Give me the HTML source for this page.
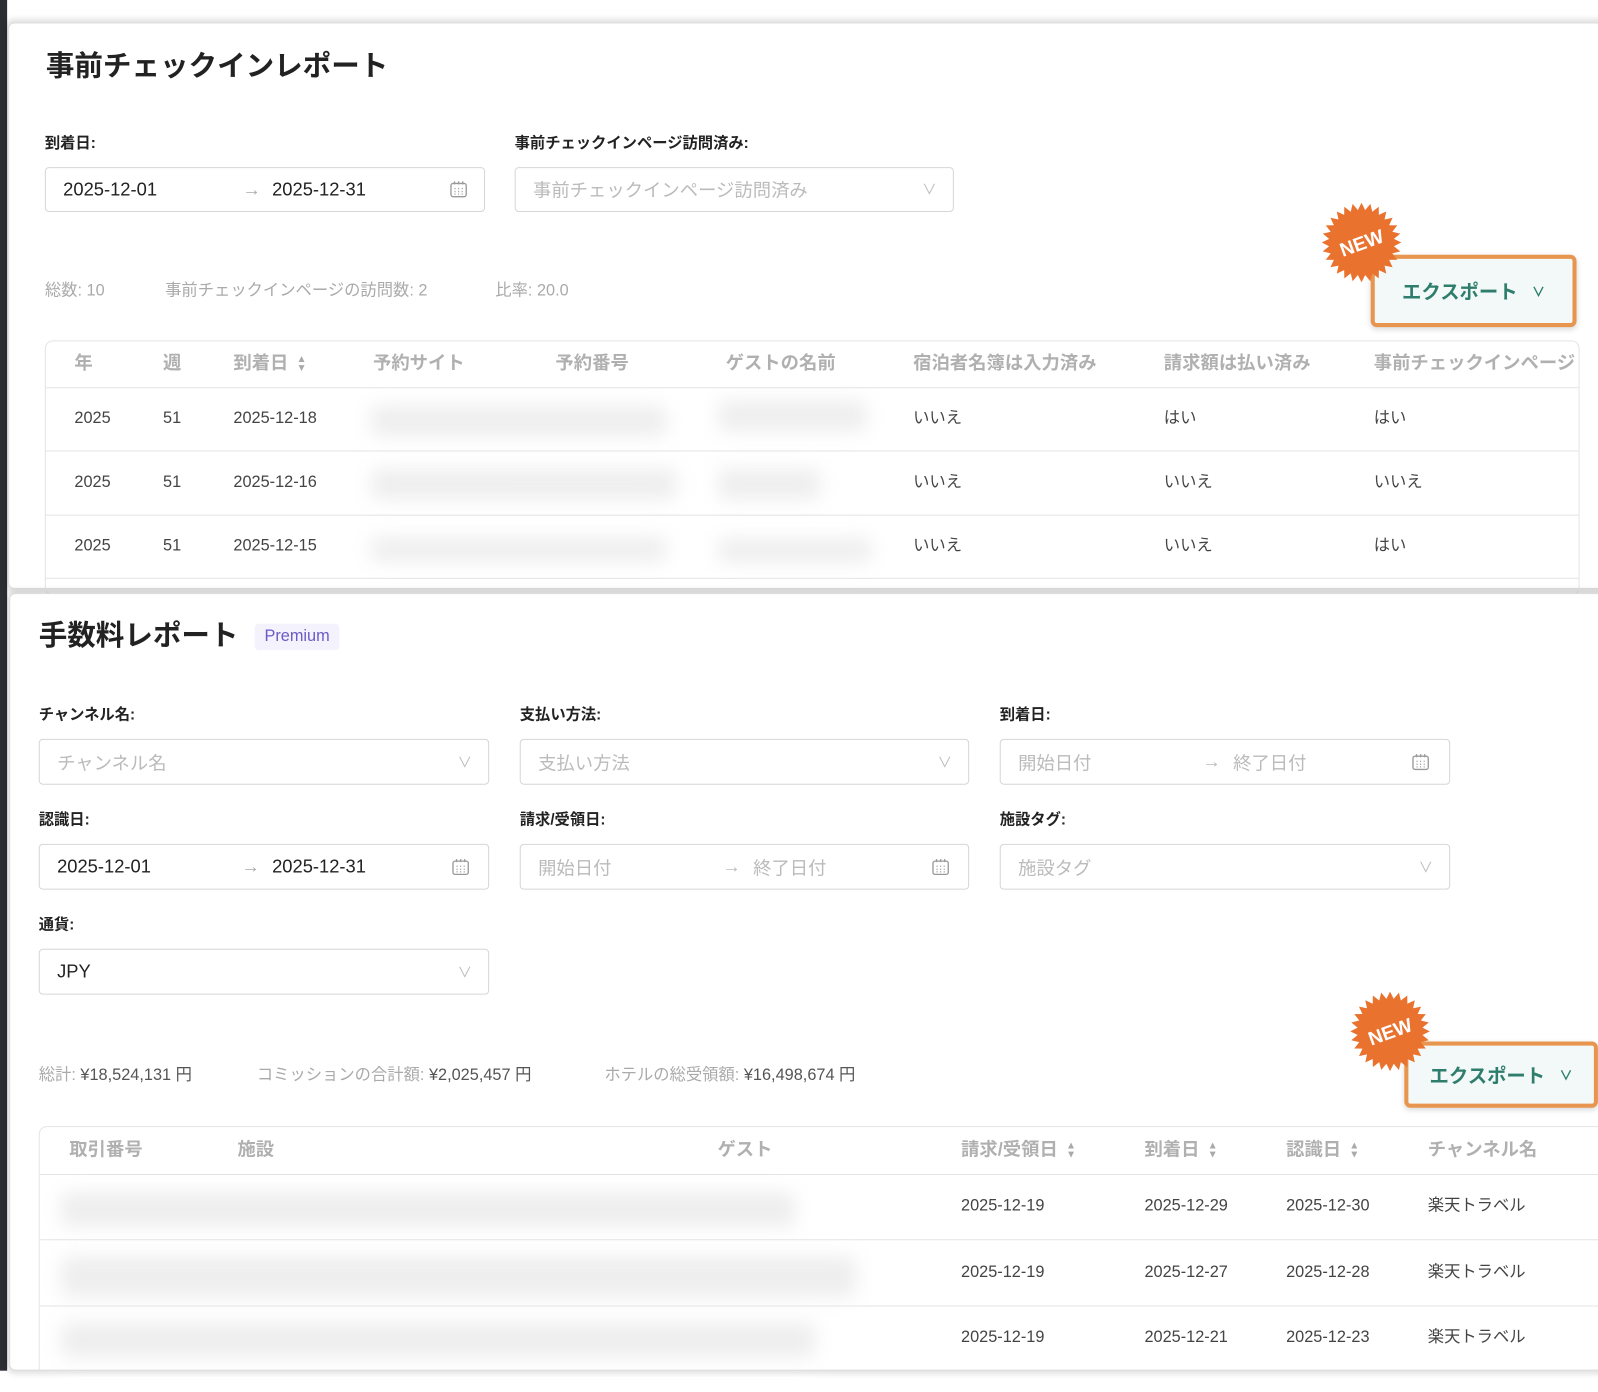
<!DOCTYPE html>
<html><head><meta charset="utf-8"><style>
*{box-sizing:border-box;margin:0;padding:0}
body{width:1598px;height:1392px;background:#fff;position:relative;overflow:hidden;font-family:"Liberation Sans","Noto Sans CJK JP",sans-serif;color:#333}
#w{position:absolute;left:0;top:0;width:1568px;height:1366px;transform:scale(1.0191);transform-origin:0 0}
.a{position:absolute}
.strip{left:0;top:0;width:7px;height:1345px;background:#2b2e33}
.card{background:#fff;border:1px solid #ddd;box-shadow:0 0 6px 3px rgba(0,0,0,.12);border-radius:6px}
.title{font-size:28px;font-weight:bold;color:#222;white-space:nowrap;line-height:36px}
.lbl{font-size:15px;font-weight:bold;color:#222;white-space:nowrap;line-height:20px}
.inp{border:1px solid #d6d6d6;border-radius:4px;height:45px;font-size:18px;color:#222;display:flex;align-items:center;padding-left:17px;background:#fff}
.ph{color:#bbb}
.stat{font-size:16px;color:#aaa;white-space:nowrap;line-height:20px}
.th{font-size:18px;font-weight:bold;color:#b0b0b0;white-space:nowrap;line-height:24px}
.td{font-size:16px;color:#444;white-space:nowrap;line-height:20px;height:20px}
.line{height:1px;background:#e4e4e4}
.blur{background:#eeeeee;filter:blur(9px);border-radius:6px}
.exp{border:4px solid #e8964f;border-radius:6px;background:#f2f9f8;box-shadow:0 2px 6px rgba(0,0,0,.15);color:#2f7d6c;font-weight:bold;font-size:19px;display:flex;align-items:center;justify-content:center;gap:14px;white-space:nowrap}
.chev{font-size:13px}
.sort{font-size:10px;color:#aaa;line-height:9px;display:inline-block;vertical-align:middle;margin-left:8px}
</style></head><body>
<div id="w">
<div class="a strip"></div>

<div class="a card" style="left:8px;top:22px;width:1600px;height:556px"></div>
<div class="a title" style="left:45px;top:47px">事前チェックインレポート</div>
<div class="a lbl" style="left:44px;top:131px">到着日:</div>
<div class="a inp" style="left:44px;top:164px;width:432px;height:44px">2025-12-01<span class="a" style="left:193px;color:#aaa">→</span><span class="a" style="left:222px">2025-12-31</span><svg class="a" style="left:396px" width="18" height="18" viewBox="0 0 18 18" fill="none" stroke="#999" stroke-width="1.3"><rect x="1.5" y="3" width="15" height="13" rx="2"/><path d="M5 1v3M9 1v3M13 1v3"/><path d="M5 8h1M8.5 8h1M12 8h1M5 11h1M8.5 11h1M12 11h1M5 13.5h1M8.5 13.5h1M12 13.5h1"/></svg></div>
<div class="a lbl" style="left:505px;top:131px">事前チェックインページ訪問済み:</div>
<div class="a inp" style="left:505px;top:164px;width:431px;height:44px"><span class="ph">事前チェックインページ訪問済み</span><span class="a ph" style="right:16px;font-size:14px">∨</span></div>
<div class="a stat" style="left:44px;top:276px">総数: 10</div>
<div class="a stat" style="left:162px;top:276px">事前チェックインページの訪問数: 2</div>
<div class="a stat" style="left:486px;top:276px">比率: 20.0</div>

<div class="a exp" style="left:1345px;top:250px;width:202px;height:71px">エクスポート<span class="chev">∨</span></div>
<svg class="a star" style="left:1296px;top:198px" width="80" height="80"></svg>

<div class="a" style="left:44px;top:334px;width:1506px;height:250px;border:1px solid #e4e4e4;border-radius:8px"></div>
<div class="a th" style="left:73px;top:344px">年</div>
<div class="a th" style="left:160px;top:344px">週</div>
<div class="a th" style="left:229px;top:344px">到着日<span class="sort">▲<br>▼</span></div>
<div class="a th" style="left:366px;top:344px">予約サイト</div>
<div class="a th" style="left:545px;top:344px">予約番号</div>
<div class="a th" style="left:712px;top:344px">ゲストの名前</div>
<div class="a th" style="left:896px;top:344px">宿泊者名簿は入力済み</div>
<div class="a th" style="left:1142px;top:344px">請求額は払い済み</div>
<div class="a th" style="left:1348px;top:344px;width:200px;overflow:hidden">事前チェックインページ</div>
<div class="a line" style="left:45px;top:380px;width:1504px"></div>
<div class="a line" style="left:45px;top:442px;width:1504px"></div>
<div class="a line" style="left:45px;top:505px;width:1504px"></div>
<div class="a line" style="left:45px;top:567px;width:1504px"></div>
<div class="a td" style="left:73px;top:401px">2025</div><div class="a td" style="left:160px;top:401px">51</div><div class="a td" style="left:229px;top:401px">2025-12-18</div>
<div class="a td" style="left:896px;top:401px">いいえ</div><div class="a td" style="left:1142px;top:401px">はい</div><div class="a td" style="left:1348px;top:401px">はい</div>
<div class="a td" style="left:73px;top:464px">2025</div><div class="a td" style="left:160px;top:464px">51</div><div class="a td" style="left:229px;top:464px">2025-12-16</div>
<div class="a td" style="left:896px;top:464px">いいえ</div><div class="a td" style="left:1142px;top:464px">いいえ</div><div class="a td" style="left:1348px;top:464px">いいえ</div>
<div class="a td" style="left:73px;top:526px">2025</div><div class="a td" style="left:160px;top:526px">51</div><div class="a td" style="left:229px;top:526px">2025-12-15</div>
<div class="a td" style="left:896px;top:526px">いいえ</div><div class="a td" style="left:1142px;top:526px">いいえ</div><div class="a td" style="left:1348px;top:526px">はい</div>
<div class="a blur" style="left:364px;top:398px;width:290px;height:30px"></div>
<div class="a blur" style="left:705px;top:393px;width:145px;height:30px"></div>
<div class="a blur" style="left:364px;top:460px;width:300px;height:30px"></div>
<div class="a blur" style="left:705px;top:460px;width:100px;height:30px"></div>
<div class="a blur" style="left:364px;top:527px;width:290px;height:24px"></div>
<div class="a blur" style="left:705px;top:528px;width:150px;height:24px"></div>

<div class="a card" style="left:9px;top:582px;width:1600px;height:763px;overflow:hidden">
  <div class="a" style="left:28px;top:522px;width:1580px;height:280px;border:1px solid #e4e4e4;border-radius:8px"></div>
</div>
<div class="a title" style="left:38px;top:606px">手数料レポート</div>
<div class="a" style="left:250px;top:612px;width:83px;height:26px;background:#f4f2fd;border-radius:4px;color:#6b5bc4;font-size:16px;text-align:center;line-height:26px">Premium</div>

<div class="a lbl" style="left:38px;top:692px">チャンネル名:</div>
<div class="a lbl" style="left:510px;top:692px">支払い方法:</div>
<div class="a lbl" style="left:981px;top:692px">到着日:</div>
<div class="a inp" style="left:38px;top:725px;width:442px"><span class="ph">チャンネル名</span><span class="a ph" style="right:16px;font-size:14px">∨</span></div>
<div class="a inp" style="left:510px;top:725px;width:441px"><span class="ph">支払い方法</span><span class="a ph" style="right:16px;font-size:14px">∨</span></div>
<div class="a inp" style="left:981px;top:725px;width:442px"><span class="ph">開始日付</span><span class="a ph" style="left:198px">→</span><span class="a ph" style="left:228px">終了日付</span><svg class="a" style="left:403px" width="18" height="18" viewBox="0 0 18 18" fill="none" stroke="#999" stroke-width="1.3"><rect x="1.5" y="3" width="15" height="13" rx="2"/><path d="M5 1v3M9 1v3M13 1v3"/><path d="M5 8h1M8.5 8h1M12 8h1M5 11h1M8.5 11h1M12 11h1M5 13.5h1M8.5 13.5h1M12 13.5h1"/></svg></div>

<div class="a lbl" style="left:38px;top:795px">認識日:</div>
<div class="a lbl" style="left:510px;top:795px">請求/受領日:</div>
<div class="a lbl" style="left:981px;top:795px">施設タグ:</div>
<div class="a inp" style="left:38px;top:828px;width:442px">2025-12-01<span class="a" style="left:198px;color:#aaa">→</span><span class="a" style="left:228px">2025-12-31</span><svg class="a" style="left:404px" width="18" height="18" viewBox="0 0 18 18" fill="none" stroke="#999" stroke-width="1.3"><rect x="1.5" y="3" width="15" height="13" rx="2"/><path d="M5 1v3M9 1v3M13 1v3"/><path d="M5 8h1M8.5 8h1M12 8h1M5 11h1M8.5 11h1M12 11h1M5 13.5h1M8.5 13.5h1M12 13.5h1"/></svg></div>
<div class="a inp" style="left:510px;top:828px;width:441px"><span class="ph">開始日付</span><span class="a ph" style="left:198px">→</span><span class="a ph" style="left:228px">終了日付</span><svg class="a" style="left:403px" width="18" height="18" viewBox="0 0 18 18" fill="none" stroke="#999" stroke-width="1.3"><rect x="1.5" y="3" width="15" height="13" rx="2"/><path d="M5 1v3M9 1v3M13 1v3"/><path d="M5 8h1M8.5 8h1M12 8h1M5 11h1M8.5 11h1M12 11h1M5 13.5h1M8.5 13.5h1M12 13.5h1"/></svg></div>
<div class="a inp" style="left:981px;top:828px;width:442px"><span class="ph">施設タグ</span><span class="a ph" style="right:16px;font-size:14px">∨</span></div>

<div class="a lbl" style="left:38px;top:898px">通貨:</div>
<div class="a inp" style="left:38px;top:931px;width:442px">JPY<span class="a ph" style="right:16px;font-size:14px">∨</span></div>

<div class="a stat" style="left:38px;top:1046px">総計: <span style="color:#555">¥18,524,131 円</span></div>
<div class="a stat" style="left:252px;top:1046px">コミッションの合計額: <span style="color:#555">¥2,025,457 円</span></div>
<div class="a stat" style="left:593px;top:1046px">ホテルの総受領額: <span style="color:#555">¥16,498,674 円</span></div>

<div class="a exp" style="left:1378px;top:1022px;width:190px;height:65px">エクスポート<span class="chev">∨</span></div>
<svg class="a star" style="left:1324px;top:972px" width="80" height="80"></svg>

<div class="a th" style="left:68px;top:1116px">取引番号</div>
<div class="a th" style="left:233px;top:1116px">施設</div>
<div class="a th" style="left:704px;top:1116px">ゲスト</div>
<div class="a th" style="left:943px;top:1116px">請求/受領日<span class="sort">▲<br>▼</span></div>
<div class="a th" style="left:1123px;top:1116px">到着日<span class="sort">▲<br>▼</span></div>
<div class="a th" style="left:1262px;top:1116px">認識日<span class="sort">▲<br>▼</span></div>
<div class="a th" style="left:1401px;top:1116px">チャンネル名</div>
<div class="a line" style="left:39px;top:1152px;width:1540px"></div>
<div class="a line" style="left:39px;top:1216px;width:1540px"></div>
<div class="a line" style="left:39px;top:1281px;width:1540px"></div>
<div class="a td" style="left:943px;top:1174px">2025-12-19</div><div class="a td" style="left:1123px;top:1174px">2025-12-29</div><div class="a td" style="left:1262px;top:1174px">2025-12-30</div><div class="a td" style="left:1401px;top:1174px">楽天トラベル</div>
<div class="a td" style="left:943px;top:1239px">2025-12-19</div><div class="a td" style="left:1123px;top:1239px">2025-12-27</div><div class="a td" style="left:1262px;top:1239px">2025-12-28</div><div class="a td" style="left:1401px;top:1239px">楽天トラベル</div>
<div class="a td" style="left:943px;top:1303px">2025-12-19</div><div class="a td" style="left:1123px;top:1303px">2025-12-21</div><div class="a td" style="left:1262px;top:1303px">2025-12-23</div><div class="a td" style="left:1401px;top:1303px">楽天トラベル</div>
<div class="a blur" style="left:60px;top:1170px;width:720px;height:34px"></div>
<div class="a blur" style="left:60px;top:1233px;width:780px;height:40px"></div>
<div class="a blur" style="left:60px;top:1298px;width:740px;height:34px"></div>
</div>
<script>
document.querySelectorAll('svg.star').forEach(function(s){
  var pts=[],n=28,cx=40,cy=40;
  for(var i=0;i<n*2;i++){var r=i%2?32:39,a=Math.PI*i/n;pts.push((cx+r*Math.cos(a)).toFixed(1)+','+(cy+r*Math.sin(a)).toFixed(1));}
  s.innerHTML='<polygon points="'+pts.join(' ')+'" fill="#e9722e"/><text x="40" y="47" transform="rotate(-20 40 40)" text-anchor="middle" font-family="Liberation Sans,sans-serif" font-weight="bold" font-size="19" fill="#fff">NEW</text>';
});
</script>
</body></html>
